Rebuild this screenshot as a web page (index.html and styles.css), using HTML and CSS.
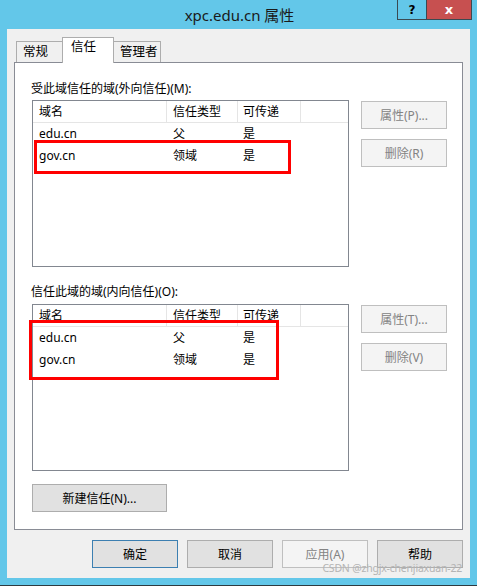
FILE: index.html
```html
<!DOCTYPE html>
<html lang="zh-CN">
<head>
<meta charset="utf-8">
<title>xpc.edu.cn 属性</title>
<link rel="stylesheet" href="styles.css">
</head>
<body>
<div class="frame">
  <div class="titlebar">
    <div class="title">xpc.edu.cn 属性</div>
    <div class="controls">
      <div class="ctl help">?</div>
      <div class="ctl close">x</div>
    </div>
  </div>
  <div class="client">
    <div class="tabs">
      <div class="tab">常规</div>
      <div class="tab active">信任</div>
      <div class="tab">管理者</div>
    </div>
    <div class="panel">
      <div class="label first">受此域信任的域(外向信任)(M):</div>
      <div class="section">
        <div class="list">
          <div class="hdr">
            <div class="c1">域名</div>
            <div class="c2">信任类型</div>
            <div class="c3">可传递</div>
          </div>
          <div class="row"><div class="c1">edu.cn</div><div class="c2">父</div><div class="c3">是</div></div>
          <div class="row"><div class="c1">gov.cn</div><div class="c2">领域</div><div class="c3">是</div></div>
          <div class="mark mark-a"></div>
        </div>
        <div class="side">
          <div class="btn disabled">属性(P)...</div>
          <div class="btn disabled">删除(R)</div>
        </div>
      </div>
      <div class="label second">信任此域的域(内向信任)(O):</div>
      <div class="section">
        <div class="list">
          <div class="hdr">
            <div class="c1">域名</div>
            <div class="c2">信任类型</div>
            <div class="c3">可传递</div>
          </div>
          <div class="row"><div class="c1">edu.cn</div><div class="c2">父</div><div class="c3">是</div></div>
          <div class="row"><div class="c1">gov.cn</div><div class="c2">领域</div><div class="c3">是</div></div>
          <div class="mark mark-b"></div>
        </div>
        <div class="side">
          <div class="btn disabled">属性(T)...</div>
          <div class="btn disabled">删除(V)</div>
        </div>
      </div>
      <div class="btn newtrust">新建信任(N)...</div>
    </div>
    <div class="footer">
      <div class="btn default">确定</div>
      <div class="btn">取消</div>
      <div class="btn disabled">应用(A)</div>
      <div class="btn">帮助</div>
    </div>
    <div class="watermark">CSDN @zhgjx-chenjiaxuan-22</div>
  </div>
  <div class="bottomedge"></div>
  <div class="taskline"></div>
</div>
</body>
</html>
```

FILE: styles.css
```css
* { box-sizing: border-box; }
html, body { margin: 0; padding: 0; }
body {
  width: 477px;
  height: 586px;
  overflow: hidden;
  background: #63c7e9;
  font-family: "Noto Sans", "Noto Sans CJK SC", sans-serif;
  font-size: 12px;
  color: #000;
}
.frame { display: flex; flex-direction: column; height: 586px; }
.titlebar {
  position: relative;
  height: 29px;
  display: flex;
  align-items: center;
  justify-content: center;
}
.title {
  font-size: 15px;
  color: #1a1a1a;
  margin-top: 0;
  margin-left: 2px;
}
.controls {
  position: absolute;
  top: 0;
  left: 397px;
  display: flex;
}
.ctl {
  height: 20px;
  border: 1px solid #3a4a52;
  border-top: none;
  display: flex;
  align-items: center;
  justify-content: center;
  font-weight: bold;
  font-family: "DejaVu Sans", sans-serif;
}
.help { width: 30px; font-size: 12px; color: #000; }
.close {
  width: 46px;
  margin-left: -1px;
  background: #c75050;
  color: #fff;
  font-size: 13px;
}
.client {
  position: relative;
  margin: 0 7px;
  height: 549px;
  background: #f0f0f0;
  display: flex;
  flex-direction: column;
}
.tabs {
  height: 33px;
  padding-left: 9px;
  display: flex;
  align-items: flex-end;
}
.tab {
  height: 21px;
  border: 1px solid #adadad;
  border-bottom: none;
  background: #f0f0f0;
  padding: 2px 0 0 6px;
  line-height: 16px;
  font-size: 12.5px;
}
.tab:nth-child(1) { width: 47px; }
.tab:nth-child(3) { width: 48px; margin-left: -1px; }
.tab.active {
  position: relative;
  z-index: 2;
  width: 52px;
  height: 26px;
  margin-left: -1px;
  margin-bottom: -1px;
  background: #fff;
  border-color: #adadad;
  padding: 1px 0 0 8px;
}
.panel {
  margin-left: 7px;
  width: 449px;
  height: 468px;
  background: #fff;
  border: 1px solid #898c95;
  padding: 18px 0 0 16px;
  display: flex;
  flex-direction: column;
}
.label { height: 16px; line-height: 16px; }
.label.first { margin-bottom: 3px; }
.label.second { margin-top: 17px; margin-bottom: 4px; }
.section { display: flex; gap: 12px; }
.list {
  position: relative;
  margin-left: 1px;
  width: 317px;
  height: 167px;
  border: 1px solid #828790;
  background: #fff;
}
.hdr {
  display: flex;
  height: 22px;
  border-bottom: 1px solid #e5e5e5;
}
.hdr > div {
  border-right: 1px solid #e5e5e5;
  line-height: 21px;
}
.row { display: flex; height: 22px; line-height: 22px; }
.c1 { width: 134px; padding-left: 6px; }
.c2 { width: 71px; padding-left: 6px; }
.c3 { width: 63px; padding-left: 5px; }
.mark {
  position: absolute;
  border: 3px solid #ff0000;
}
.mark-a { left: 1px; top: 39px; width: 257px; height: 34px; }
.mark-b { left: -4px; top: 15px; width: 250px; height: 60px; }
.side {
  display: flex;
  flex-direction: column;
  gap: 10px;
  padding-top: 1px;
}
.btn {
  width: 86px;
  height: 28px;
  background: #e1e1e1;
  border: 1px solid #adadad;
  display: flex;
  align-items: center;
  justify-content: center;
  color: #000;
}
.btn.disabled {
  background: #f4f4f4;
  border-color: #bfbfbf;
  color: #838383;
}
.btn.default { border-color: #3c7fb1; }
.newtrust {
  width: 135px;
  margin-top: 13px;
  margin-left: 1px;
}
.footer {
  display: flex;
  justify-content: flex-end;
  gap: 9px;
  margin-top: 10px;
  padding-right: 7px;
}
.watermark {
  position: absolute;
  right: 8px;
  bottom: 3px;
  font-size: 10.5px;
  color: #b4b4b4;
  letter-spacing: -0.2px;
}
.bottomedge { height: 7px; }
.taskline { height: 1px; background: #2e3a40; }
```
